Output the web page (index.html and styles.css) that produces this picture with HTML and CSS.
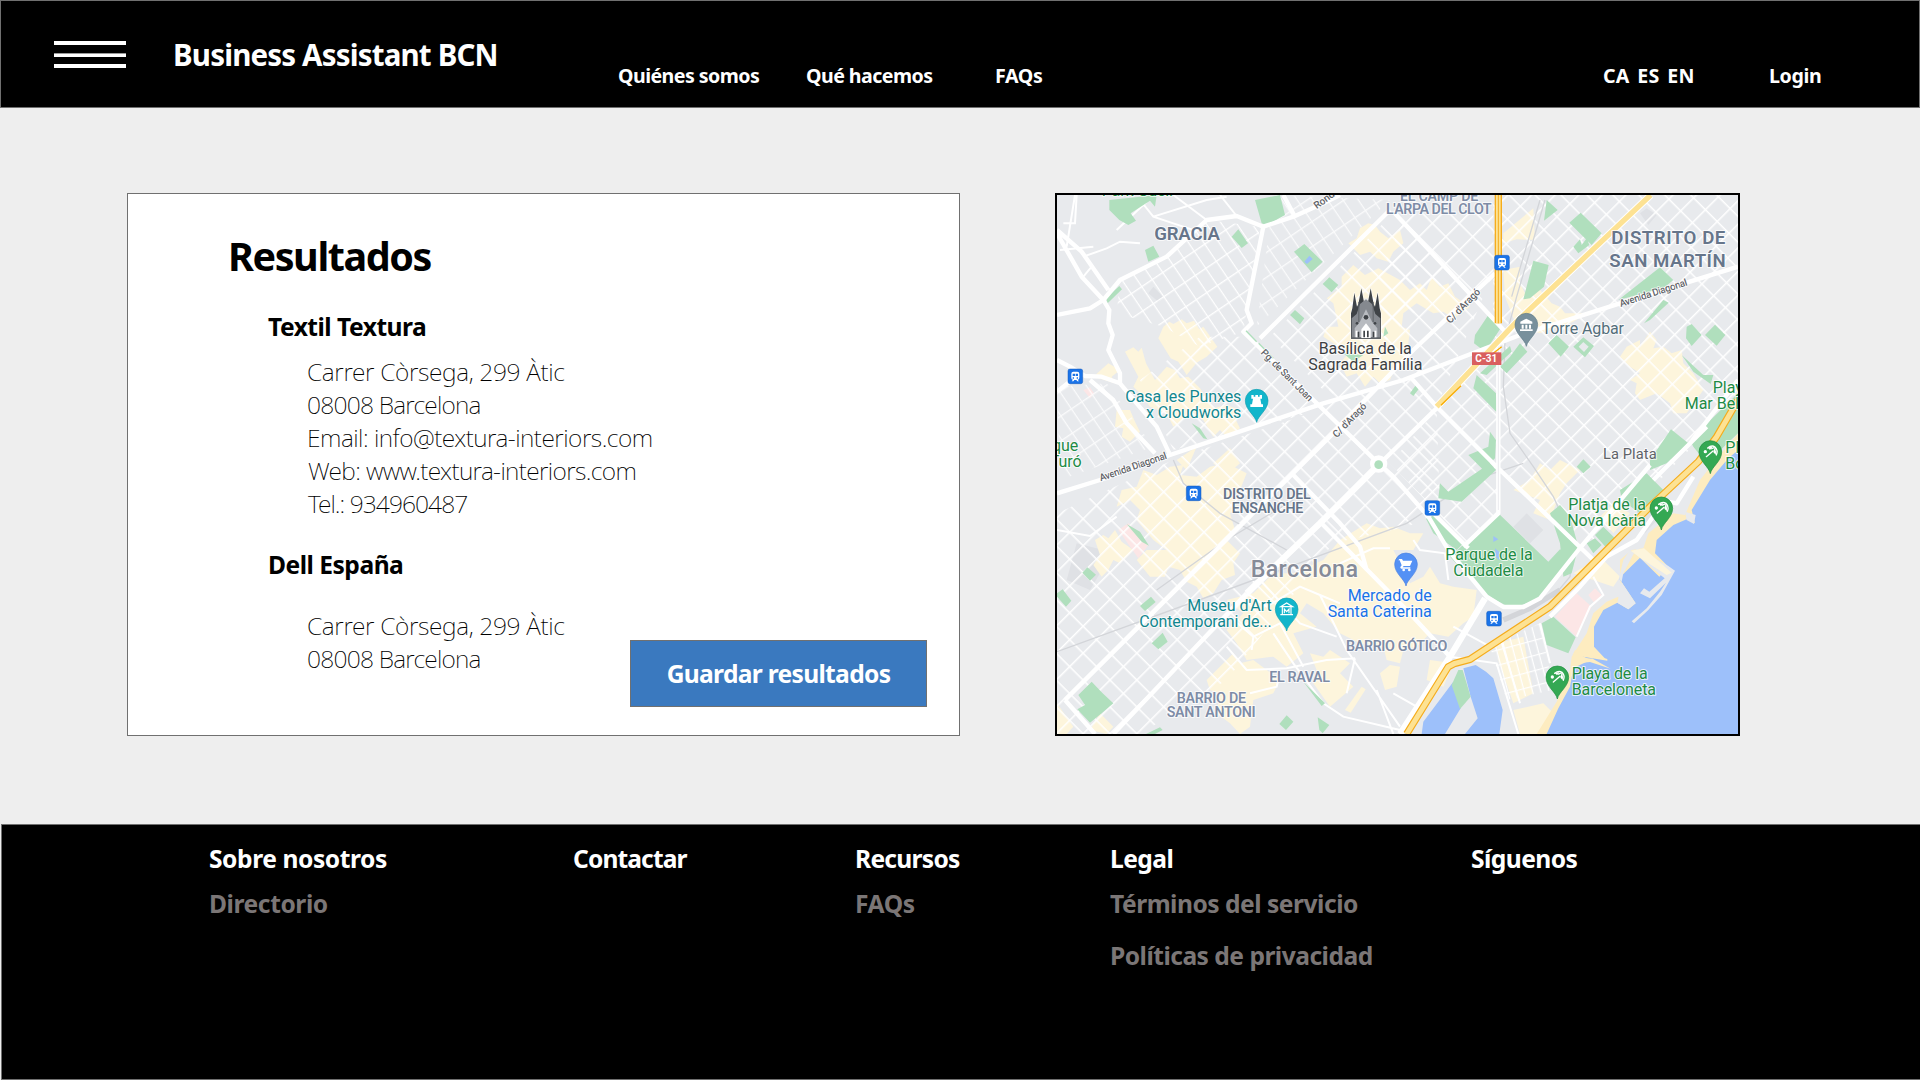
FILE: index.html
```
<!DOCTYPE html>
<html lang="es">
<head>
<meta charset="utf-8">
<title>Business Assistant BCN</title>
<link rel="stylesheet" href="styles.css">
</head>
<body>
<header class="header">
  <button class="menu" aria-label="Menú"><span></span><span class="menu-mid"></span><span></span></button>
  <div class="brand">Business Assistant BCN</div>
  <nav class="nav">
    <a>Quiénes somos</a>
    <a>Qué hacemos</a>
    <a class="nav-faqs">FAQs</a>
  </nav>
  <div class="langs"><a>CA</a><a>ES</a><a>EN</a></div>
  <a class="login">Login</a>
</header>

<main class="main">
  <section class="results">
    <h1>Resultados</h1>
    <h2 class="company">Textil Textura</h2>
    <div class="address">
      <p class="l-street">Carrer Còrsega, 299 Àtic</p>
      <p class="l-city">08008 Barcelona</p>
      <p class="l-email">Email: info@textura-interiors.com</p>
      <p class="l-web">Web: www.textura-interiors.com</p>
      <p class="l-tel">Tel.: 934960487</p>
    </div>
    <div class="second">
      <div>
        <h2 class="company company-dell">Dell España</h2>
        <div class="address address-dell">
          <p class="l-street">Carrer Còrsega, 299 Àtic</p>
          <p class="l-city">08008 Barcelona</p>
        </div>
      </div>
      <button class="save">Guardar resultados</button>
    </div>
  </section>

  <section class="map">
    <svg width="681" height="539" viewBox="51 45 2043 1617" preserveAspectRatio="none">
      <defs>
        <pattern id="blocks" width="57" height="57" patternUnits="userSpaceOnUse" patternTransform="translate(1016 852) rotate(45)">
          <path d="M0 0H57M0 0V57" stroke="#fff" stroke-width="9" fill="none"/>
        </pattern>
        <pattern id="blocksEast" width="50" height="55" patternUnits="userSpaceOnUse" patternTransform="translate(1190 680) rotate(45)">
          <path d="M0 0H50M0 0V55" stroke="#fff" stroke-width="9" fill="none"/>
        </pattern>
        <pattern id="lanes" width="62" height="38" patternUnits="userSpaceOnUse" patternTransform="rotate(56)">
          <path d="M0 0H62M0 0V38" stroke="#fff" stroke-width="8" fill="none"/>
        </pattern>
        <pattern id="beachBlocks" width="44" height="24" patternUnits="userSpaceOnUse" patternTransform="rotate(75)">
          <path d="M0 0H44M0 0V24" stroke="#fff" stroke-width="7" fill="none"/>
        </pattern>
        <path id="pin" d="M0 65C-4 44-34 28-34 0A34 34 0 0 1 34 0C34 28 4 44 0 65Z"/>
        <g id="train">
          <rect width="44" height="44" rx="6" fill="#1a73e8" stroke="#1558b8" stroke-width="1.5"/>
          <path fill="#fff" d="M16 8h12q6 0 6 6v13q0 5-5 5l4 5h-5l-3-4h-6l-3 4h-5l4-5q-5 0-5-5V14q0-6 6-6z"/>
          <path fill="#1a73e8" d="M14 14h7v7h-7zM23 14h7v7h-7zM14 25h4v4h-4zM26 25h4v4h-4z"/>
        </g>
        <g id="beach">
          <use href="#pin" fill="#34a853" stroke="#1e8e3e" stroke-width="2"/>
          <circle cx="-15" cy="-1" r="5" fill="#fff"/>
          <path fill="none" stroke="#fff" stroke-width="4" stroke-linecap="round" d="M-12 14L8-3M-8-12Q4-22 14-15Q24-5 18 9"/>
          <path fill="#fff" d="M-7-12Q0-17 7-15L-1-6ZM14-10Q19-2 16 8L9 1Z"/>
          <path fill="none" stroke="#fff" stroke-width="4" d="M2-9L13-14M11-1L15-12"/>
        </g>
      </defs>

      <rect x="51" y="45" width="2043" height="1617" fill="#e8eaed"/>
      <g fill="#dfe1e5">
        <path d="M110 1090l80 20-10 70-30 50-70-30zM1790 1000l20-60 60 60-55 60zM1460 1000l50 50-40 40-50-50zM1800 100l20-15 30 20-25 30zM340 320l30 30-15 15-30-25z"/>
      </g>

      <!-- Commercial areas -->
      <g fill="#fdf5dc">
        <path d="M370 440L388 425 400 432 425 418 440 430 462 422 478 448 490 440 532 500 500 530 470 548 440 585 415 545 392 535 355 475Z"/>
        <path d="M255 515L280 502 295 515 305 503 318 550 345 600 380 560 405 570 420 595 445 590 480 625 520 685 560 675 600 690 585 715 600 745 560 770 540 750 520 770 490 720 450 700 420 725 400 740 380 700 330 680 300 640 280 620 295 590Z"/>
        <path d="M160 590L205 550 240 570 215 590 225 610ZM230 690L270 690 285 725 300 755 270 785 245 770 250 745 225 740ZM410 840L470 800 440 870ZM520 850L570 805 600 850 560 885Z"/>
        <path d="M925 190L950 175 960 145 985 130 1005 135 1020 155 1045 175 1080 150 1090 190 1060 215 1045 245 1010 235 990 215 960 225ZM905 290L940 255 975 285 1015 265 1080 300 1110 330 1140 310 1160 330 1175 290 1200 320 1225 310 1245 350 1290 380 1265 400 1240 415 1210 395 1180 400 1130 370 1090 400 1085 440 1110 450 1100 530 1070 550 1050 600 1020 610 1000 590 975 620 950 580 920 590 900 550 925 520 850 470 860 440 895 440 880 370 860 355 905 320Z"/>
        <path d="M310 870L350 885 390 860 430 855 420 885 470 890 510 860 560 850 620 880 600 930 575 950 595 985 570 1000 585 1050 560 1080 600 1120 580 1150 585 1185 545 1200 520 1240 490 1255 470 1220 440 1205 420 1170 385 1160 375 1190 330 1190 290 1140 320 1110 380 1110 340 1080 290 1020 300 990 270 960 230 980 245 930 290 920Z"/>
        <path d="M165 1080L190 1065 205 1075 225 1050 245 1085 280 1110 240 1150 220 1140 205 1170 185 1190 160 1155 180 1125Z"/>
        <path d="M1390 160L1480 85 1485 180 1430 178 1390 190ZM1390 270L1440 260 1440 310 1460 350 1500 330 1535 370 1560 380 1575 400 1640 400 1600 425 1500 460 1430 440 1395 350Z"/>
        <path d="M1740 530L1760 500 1800 480 1800 500 1830 455 1850 480 1840 505 1870 500 1895 520 1925 510 1930 550 1960 580 1990 630 1940 700 1900 700 1890 670 1850 640 1800 660 1785 640 1790 610 1770 600 1800 580 1770 560Z"/>
        <path d="M1470 900L1500 850 1530 870 1560 840 1620 870 1580 910 1560 940 1530 1020 1480 1000 1500 960 1420 930ZM1770 1000L1720 970 1680 1010 1720 1060ZM1600 1180L1680 1130 1740 1190 1720 1220Z"/>
        <path d="M560 1260L640 1240 700 1180 760 1180 850 1140 900 1080 980 1030 1020 1045 1060 1040 1110 1060 1150 1060 1120 1110 1060 1110 1080 1150 1110 1210 1150 1190 1170 1160 1200 1210 1240 1220 1310 1230 1300 1310 1270 1330 1225 1370 1170 1360 1130 1400 1090 1410 1080 1450 1040 1440 1030 1400 960 1390 900 1360 850 1300 800 1270 780 1300 830 1340 760 1360 790 1420 740 1460 700 1430 620 1440 590 1390 560 1350 610 1300Z"/>
        <path d="M500 1500L580 1420 600 1450 640 1440 720 1500 700 1540 640 1560 630 1640 600 1662 570 1630 530 1600 540 1540 510 1530ZM810 1420L850 1430 870 1410 930 1450 900 1480 940 1520 870 1580 820 1510 830 1470ZM1020 1480L1050 1455 1080 1460 1070 1520 1035 1530Z"/>
        <path d="M51 1570L100 1640 80 1662 51 1662ZM180 1600L220 1640 200 1662 150 1650ZM1170 1440L1240 1450 1210 1520 1160 1500Z"/>
        <path d="M1370 1390L1450 1370 1480 1540 1420 1570 1375 1440ZM1420 1590L1510 1570 1540 1600 1500 1662 1440 1662Z"/>
        <path d="M915 1590l50-70 12 8-45 70z"/>
      </g>
      <g fill="#fce6e6">
        <path d="M235 1050L265 1030 325 1095 295 1135ZM1545 1310L1610 1240 1655 1280 1610 1370ZM1645 1245L1665 1225 1685 1245 1665 1272ZM130 630L150 622 162 640 150 655Z"/>
      </g>

      <!-- Street grid -->
      <path fill="url(#blocks)" d="M51 1000L420 830 840 690 1100 100 1360 100 1360 280 1190 680 1200 1000 1100 1040 880 1090 560 1500 300 1662 51 1662Z"/>
      <path fill="url(#blocks)" d="M480 470L620 470 840 690 400 810 300 600Z"/>
      <path fill="url(#blocks)" d="M690 470L1060 100 1240 280 870 650Z"/>
      <path fill="url(#blocksEast)" d="M1360 45H2094V660L1830 930 1640 1120 1380 860 1190 680 1360 520Z"/>
      <path fill="url(#blocksEast)" d="M1050 850L1190 690 1375 870 1375 1000 1280 1090Z"/>
      <path fill="url(#lanes)" d="M240 300L380 230 500 120 660 140 620 390 610 455 480 500 370 440 230 400Z"/>
      <path fill="url(#lanes)" d="M51 620L200 610 340 800 60 900ZM700 45L1050 60 650 440Z" opacity=".8"/>
      <path fill="url(#beachBlocks)" d="M1350 1400L1500 1330 1540 1530 1400 1560Z"/>
      <g fill="none" stroke="#fff" stroke-width="6">
        <path d="M70 130L105 130 110 45M105 45L80 200M130 230L200 205 240 185 300 190M60 210L160 200M300 60L340 110 400 130 460 150M320 65L230 150M340 110L500 60 560 50M500 120L400 45M590 108L540 45M130 290L155 260"/>
        <path d="M620 1240L680 1280 780 1220 840 1245M570 1310L640 1370 635 1410M640 1370L720 1330 790 1460M560 1400L620 1470 740 1465 860 1440 945 1435M630 1540L710 1520 720 1480M660 1200L780 1330 890 1370M840 1245L920 1410 1080 1640M700 1360L760 1450 850 1570 910 1610 1080 1650M945 1435L920 1540M1010 1530L1060 1662M900 1270L840 1245"/>
        <path d="M1230 1430L1370 1450 1435 1662M1500 1330L1530 1450M1380 1370L1440 1570M1240 1340L1350 1400M1120 1080L1140 1110 1215 1120 1225 1200M1060 1540L1130 1580M1610 1370L1650 1280 1690 1245 1660 1190M51 1050L150 1068 230 1010M900 1150L1000 1105 1050 1105"/>
      </g>

      <!-- Railways -->
      <g fill="none" stroke="#d3d5d9" stroke-width="4">
        <path d="M1515 60L1430 350 1395 480 1390 620 1410 760 1480 860M1500 60L1415 350M51 1415L560 1230 1100 1030 1300 900 1450 850M350 1230L560 1080 760 960M400 840L430 910 540 1000 740 1110M1480 860L1540 950 1600 1080 1590 1190 1540 1250"/>
        <path stroke-width="16" d="M1390 1320L1470 1285 1560 1230"/>
      </g>

      <!-- Parks -->
      <g fill="#b0dfbd">
        <path d="M208 60L350 45 345 80 330 62 272 100 288 122 265 135 238 120 208 90ZM645 60L720 45 735 105 680 135 665 130ZM575 170L595 148 624 190 605 204ZM315 210L340 197 358 230 325 245ZM198 355L238 318 246 328 203 370ZM762 215L793 192 848 245 815 277ZM848 312L868 292 895 315 875 337ZM750 405L765 390 793 415 780 433Z"/>
        <path d="M455 730L480 745 502 778 490 775ZM1035 440L1045 460 1030 470ZM910 520L970 525 940 545ZM260 1032L300 1055 327 1097 305 1085ZM127 1178L142 1162 168 1184 150 1202ZM51 1240L68 1228 94 1262 78 1280 51 1250ZM300 1278L333 1250 347 1266 315 1293ZM335 1390L368 1358 383 1385 355 1408ZM115 1545L155 1505 188 1540 220 1570 185 1600 150 1628 112 1588 135 1575ZM718 1632L740 1606 760 1625 738 1650ZM833 1612L868 1635 848 1660 838 1650ZM318 1662L360 1642 368 1650 345 1662ZM790 1505L855 1570 845 1578ZM1110 640L1130 612 1138 625 1120 648Z"/>
        <path d="M1520 60L1553 90 1512 122ZM1588 128L1622 98 1685 160 1655 195ZM1600 200L1620 178 1625 195 1640 175 1648 195 1615 220ZM1480 242L1526 255 1512 320 1470 355 1450 358ZM1305 465L1345 405 1385 440 1335 515 1302 490ZM1320 580L1410 498 1415 515 1340 585ZM1410 530L1440 490 1462 515 1400 580 1380 560ZM1310 585L1368 640 1370 697 1300 625ZM1525 490L1550 465 1587 500 1562 530ZM1600 500L1630 472 1662 498 1635 532ZM1735 360L1860 262 1900 300 1870 325ZM1812 430L1870 360 1886 368 1830 420ZM1940 440L1955 432 1985 465 1955 498 1938 475ZM1995 465L2025 434 2056 465 2030 497ZM1925 525L1990 585 2020 585 2012 612 1960 575ZM1830 840L1893 748 1945 790 1880 850 1830 870ZM1950 780L2094 640 2094 760 2000 850 1960 800ZM1610 860L1630 838 1652 860 1630 880Z"/>
        <path d="M1350 755L1368 780 1365 835 1330 870 1285 825 1345 800ZM1200 910L1225 935 1350 850 1368 870 1265 965 1195 955ZM1155 1010L1180 1005 1270 1090 1250 1110 1180 1060ZM1375 1000L1525 1145 1560 1108 1590 1135 1500 1255 1445 1275 1395 1275 1330 1240 1230 1130ZM1530 1000L1560 975 1590 1010 1615 1100 1595 1180 1570 1190 1560 1090ZM1740 930L1820 880 1870 930 1800 1000 1745 960ZM1640 1090L1665 1075 1685 1095 1660 1120ZM1665 1065L1690 1040 1725 1075 1700 1105ZM1505 1330L1540 1310 1607 1372 1585 1420 1520 1395Z"/>
      </g>
      <path fill="#e8eaed" d="M1616 500l14-14 16 14-14 16z"/>
      <path fill="#9dc0fa" d="M793 245l15-18 10 10-17 15zM1360 1068l15 10-15 8zM1365 1105l12 10v25l-10-10z"/>

      <!-- Sea, beaches and harbour -->
      <g transform="translate(1050 840)">
        <path fill="#fdecc0" d="M440 822L500 725 540 630 545 590 590 520 610 460 650 425 685 410 710 440 690 360 690 300 725 270 760 265 775 220 850 160 885 165 930 60 985 -10 1045 -80V822Z"/>
        <path fill="#9dc0fa" d="M470 822L505 745 540 680 550 625 605 598 650 625 558 578 650 601 612 560 612 500 640 450 682 428 715 448 737 430 687 355 750 293 808 350 835 320 795 280 800 240 850 195 890 178 915 190 905 150 960 60 1015 -5 1045 -30V822Z"/>
        <path fill="#e8eaed" d="M835 318L855 332 815 405 775 450 732 490 725 484 770 445 810 395 828 368 780 415 750 400 762 385 778 395 824 355 805 340 750 293 720 270 700 300 687 355 737 430 715 448 682 428 700 340 740 265ZM885 155L917 165 912 192 890 180Z"/>
        <path fill="#fdecc0" d="M555 570L652 597V602L548 585ZM548 590L608 596 662 626 600 606 545 612Z"/>
        <path fill="#fdf5dc" d="M722 272L762 265 845 338 830 345 750 293Z"/>
        <path fill="#9dc0fa" d="M95 822L100 785 190 665 212 745 165 822ZM220 625L257 615 288 635 310 655 338 750 328 822H225L263 775 242 710Z"/>
        <path fill="#b0dfbd" d="M205 630H218L242 710 210 747 185 675Z"/>
      </g>

      <!-- Avenues -->
      <g fill="none" stroke="#fff" stroke-width="13" stroke-linejoin="round">
        <path d="M51 405L150 385 190 360 240 300 380 230 500 120 590 108 670 140 760 110 850 70 900 45M51 150L125 215 205 330M51 160L125 290 190 360M190 360L208 390 205 430 218 465 205 510 240 580 240 610M51 540L90 560 135 588 185 590 240 610 290 670 350 740 388 820"/>
        <path d="M150 600L220 660 260 730 345 820M51 635L120 580M670 140L620 390 635 430 610 455 1005 840 1060 890 1165 1010 1225 1110 1340 1250 1390 1281 1450 1281 1500 1255 1615 1110 1830 855M660 475L1050 90M730 45L765 110M1060 95L1400 460"/>
        <path d="M51 940L180 900 390 825 850 670 1090 600 1440 465 1740 370 2094 260M1110 590L1190 680 1370 860 1660 1140M1375 500V1000L1270 1100M75 1560L880 760 1120 510 1365 280M75 1560L165 1662M220 1662L620 1240M1000 870L1195 680M1155 1010L1180 1000 1285 1105"/>
        <path d="M840 1025L1100 1290 1230 1430M760 885L900 1030 960 1100 980 1170M1950 790L2094 600M1840 900L2000 740M1860 960L1910 970 1960 890M1530 1310L1620 1220 1700 1130 1790 1080 1860 980"/>
        <path stroke-width="19" d="M620 1240L840 1030 1005 865M1335 1255L1230 1430 1080 1662"/>
      </g>
      <circle cx="1016" cy="852" r="26" fill="#fff"/>
      <circle cx="1016" cy="854" r="13" fill="#b0dfbd"/>
      <path d="M618 452L650 485M656 490L700 535" stroke="#b0dfbd" stroke-width="4"/>
      <path d="M1375 500V990" stroke="#dfe1e5" stroke-width="2"/>

      <!-- Highways -->
      <g fill="none" stroke-linejoin="round">
        <path stroke="#fff" stroke-width="22" d="M1832 45L1430 425 1190 680"/>
        <path stroke="#fde293" stroke-width="16" d="M1832 45L1430 425 1190 680"/>
        <path stroke="#f9ab00" stroke-width="4" d="M1263 617L1203 676M1385 500L1360 520"/>
        <path stroke="#f5ac1c" stroke-width="22" d="M1375 45V430"/>
        <path stroke="#fde293" stroke-width="14" d="M1375 45V430"/>
        <path stroke="#f5ac1c" stroke-width="3" d="M1375 45V430"/>
        <path stroke="#f5ac1c" stroke-width="22" d="M1100 1662L1160 1565 1225 1460 1245 1450 1290 1438 1530 1280 1650 1160 1830 980 1975 845 2030 770 2094 660"/>
        <path stroke="#fde293" stroke-width="15" d="M1100 1662L1160 1565 1225 1460 1245 1450 1290 1438 1530 1280 1650 1160 1830 980 1975 845 2030 770 2094 660"/>
      </g>

      <!-- Sagrada Família -->
      <g>
        <path fill="#3f4347" stroke="#fff" stroke-width="3" paint-order="stroke" d="M933 477V400L937 385 943 338 951 380 955 372 964 325 972 366H984L992 325 1001 372 1005 380 1013 338 1019 385 1023 400V477Z"/>
        <path fill="#e8eaed" d="M973 355h10v8h-10z"/>
        <path fill="#85898f" d="M935 477V415L950 402 960 372 978 358 996 372 1006 402 1021 415V477Z"/>
        <path fill="#b8bbc0" d="M944 477V445L960 425 978 388 996 425 1012 445V477Z"/>
        <path fill="#5f6368" d="M955 366h3v60h-3zM998 366h3v60h-3zM933 472h90v5h-90z"/>
        <path fill="#fff" d="M964 474V448L978 430 992 448V474ZM947 472V452h6V472ZM1003 472V452h6V472Z"/>
        <path fill="#3f4347" d="M970 472V452h5V472ZM981 472V452h5V472ZM953 472V455h5V472ZM998 472V455h5V472Z"/>
        <circle cx="978" cy="412" r="7" fill="#3f4347"/><circle cx="951" cy="430" r="4" fill="#3f4347"/><circle cx="1005" cy="430" r="4" fill="#3f4347"/>
      </g>

      <!-- Labels -->
      <g class="lbl poi" fill="#1e8b45">
        <text x="185" y="49" textLength="214">Park Güell</text>
        <text x="115" y="812" text-anchor="end">Parque</text>
        <text x="125" y="860" text-anchor="end">del Turó</text>
        <text x="2018" y="640">Playa de</text>
        <text x="1934" y="687">Mar Bella</text>
        <text x="2056" y="820">Platja</text>
        <text x="2056" y="868">Bogatell</text>
        <text x="1585" y="990" textLength="233">Platja de la</text>
        <text x="1582" y="1038" textLength="236">Nova Icària</text>
        <text x="1216" y="1139" textLength="262">Parque de la</text>
        <text x="1240" y="1188" textLength="210">Ciudadela</text>
        <text x="1595" y="1497" textLength="228">Playa de la</text>
        <text x="1595" y="1545" textLength="253">Barceloneta</text>
      </g>
      <g class="lbl poi" fill="#12878f">
        <text x="256" y="667" textLength="348">Casa les Punxes</text>
        <text x="318" y="714" textLength="286">x Cloudworks</text>
        <text x="442" y="1293" textLength="253">Museu d'Art</text>
        <text x="298" y="1341" textLength="397">Contemporani de...</text>
      </g>
      <g class="lbl poi" fill="#1a73e8">
        <text x="923" y="1262" textLength="252">Mercado de</text>
        <text x="863" y="1310" textLength="312">Santa Caterina</text>
      </g>
      <g class="lbl poi" fill="#3c4043">
        <text x="836" y="522" textLength="279">Basílica de la</text>
        <text x="805" y="570" textLength="342">Sagrada Família</text>
      </g>
      <g class="lbl poi">
        <text x="1505" y="462" textLength="247" fill="#546e7a">Torre Agbar</text>
        <text x="1689" y="837" textLength="161" class="place" fill="#5f6368">La Plata</text>
        <text x="632" y="1190" textLength="322" class="city" fill="#868b98">Barcelona</text>
      </g>
      <g class="lbl area" fill="#66758a">
        <text x="343" y="180" textLength="197" class="district">GRACIA</text>
        <text x="1714" y="193" textLength="342" class="district">DISTRITO DE</text>
        <text x="1708" y="262" textLength="349" class="district">SAN MARTÍN</text>
        <text x="549" y="957" textLength="263">DISTRITO DEL</text>
        <text x="575" y="998" textLength="215">ENSANCHE</text>
      </g>
      <g class="lbl area" fill="#7e8ca6">
        <text x="1080" y="62" textLength="235">EL CAMP DE</text>
        <text x="1038" y="102" textLength="317">L'ARPA DEL CLOT</text>
        <text x="918" y="1413" textLength="304">BARRIO GÓTICO</text>
        <text x="688" y="1507" textLength="182">EL RAVAL</text>
        <text x="410" y="1570" textLength="208">BARRIO DE</text>
        <text x="380" y="1611" textLength="267">SANT ANTONI</text>
      </g>
      <g class="lbl road" fill="#5f6368">
        <text transform="translate(830 88) rotate(-36)">Ronda</text>
        <text transform="translate(1231 432) rotate(-46)" textLength="132">C/ d'Aragó</text>
        <text transform="translate(1742 381) rotate(-18)" textLength="212">Avenida Diagonal</text>
        <text transform="translate(661 520) rotate(45)" textLength="206">Pg. de Sant Joan</text>
        <text transform="translate(890 775) rotate(-46)" textLength="132">C/ d'Aragó</text>
        <text transform="translate(182 904) rotate(-19)" textLength="212">Avenida Diagonal</text>
      </g>
      <rect x="1296" y="517" width="88" height="38" fill="#d95f5f"/>
      <text x="1306" y="546" textLength="66" class="shield">C-31</text>

      <!-- Markers -->
      <use href="#train" x="84" y="567"/>
      <use href="#train" x="1364" y="226"/>
      <use href="#train" x="439" y="918"/>
      <use href="#train" x="1155" y="962"/>
      <use href="#train" x="1340" y="1294"/>
      <use href="#beach" x="2011" y="816"/>
      <use href="#beach" x="1864" y="985"/>
      <use href="#beach" x="1552" y="1492"/>
      <g transform="translate(650 662)">
        <use href="#pin" fill="#12b5cb" stroke="#129eaf" stroke-width="2"/>
        <path fill="#fff" d="M-16-17h7v5h5v-5h8v5h5v-5h7v11h-5l3 17h5v8h-38v-8h5l3-17h-5z"/>
      </g>
      <g transform="translate(1459 434)">
        <use href="#pin" fill="#78909c" stroke="#607d8b" stroke-width="2"/>
        <path fill="#fff" d="M0-18L18-9V-3H-18V-9ZM-14 0h6v12h-6zM-3 0h6v12h-6zM8 0h6v12h-6zM-19 14h38v5h-38z"/>
      </g>
      <g transform="translate(740 1288)">
        <use href="#pin" fill="#12b5cb" stroke="#129eaf" stroke-width="2"/>
        <path fill="none" stroke="#fff" stroke-width="3.5" d="M-18-8L0-19 18-8ZM-13-8V15M13-8V15M-19 16H19M-7 12V-1L0 7 7-1V12"/>
      </g>
      <g transform="translate(1098 1153)">
        <use href="#pin" fill="#5491f5" stroke="#4a80e0" stroke-width="2"/>
        <path fill="#fff" d="M-20-16h8l3 5h28l-7 16h-19l-3 4h23v4h-27q-4-1-3-5l4-5-6-15h-4z"/>
        <circle cx="-7" cy="17" r="4" fill="#fff"/><circle cx="10" cy="17" r="4" fill="#fff"/>
      </g>
    </svg>
  </section>
</main>

<footer class="footer">
  <div class="col">
    <h3 class="f-about">Sobre nosotros</h3>
    <a>Directorio</a>
  </div>
  <div class="col">
    <h3 class="f-contact">Contactar</h3>
  </div>
  <div class="col">
    <h3 class="f-resources">Recursos</h3>
    <a>FAQs</a>
  </div>
  <div class="col">
    <h3>Legal</h3>
    <a class="f-terms">Términos del servicio</a>
    <a class="f-privacy">Políticas de privacidad</a>
  </div>
  <div class="col">
    <h3>Síguenos</h3>
  </div>
</footer>
</body>
</html>
```
FILE: styles.css
```
* { box-sizing: border-box; margin: 0; padding: 0; }

body {
  width: 1920px;
  height: 1080px;
  overflow: hidden;
  background: #eee;
  color: #000;
  font-family: "Noto Sans", "Open Sans", sans-serif;
  white-space: nowrap;
}

button { border: 0; background: none; font: inherit; }

/* Header */
.header {
  display: grid;
  grid-template-columns: 119px 445px 984px 167px 1fr;
  height: 108px;
  padding-left: 53px;
  border: 1px solid #707070;
  background: #000;
  color: #fff;
  font-weight: 700;
  font-size: 19.6px;
  line-height: 24px;
}
.menu {
  display: flex;
  flex-direction: column;
  gap: 7.5px;
  width: 72px;
  margin-top: 40px;
}
.menu span { display: block; height: 4px; background: #fff; }
.menu .menu-mid { height: 4px; border: solid #9a9a9a; border-width: 1px 0 0; }
.brand {
  margin-top: 34px;
  font-size: 29.5px;
  line-height: 40px;
  letter-spacing: -0.82px;
}
.nav {
  display: grid;
  grid-template-columns: 188px 189px auto;
  justify-content: start;
  margin-top: 63px;
  letter-spacing: -0.55px;
}
.nav-faqs { letter-spacing: -0.34px; }
.langs {
  display: flex;
  gap: 8px;
  margin-top: 63px;
  padding-left: 1px;
  letter-spacing: 0.1px;
}
.login { margin-top: 63px; letter-spacing: -0.36px; }

/* Main */
.main {
  display: flex;
  gap: 95px;
  height: 716px;
  padding: 85px 0 0 127px;
}
.results {
  width: 833px;
  height: 543px;
  border: 1px solid #707070;
  background: #fff;
}
.results h1 {
  margin: 36px 0 0 100px;
  font-size: 39.5px;
  line-height: 52px;
  letter-spacing: -1.4px;
}
.company {
  margin: 29px 0 0 140px;
  font-size: 24.6px;
  line-height: 32px;
  letter-spacing: -0.51px;
}
.address {
  margin: 12px 0 0 179px;
  font-weight: 200;
  font-size: 24.6px;
  line-height: 33px;
}
.l-street { letter-spacing: -0.35px; }
.l-city { letter-spacing: -0.78px; }
.l-email { letter-spacing: -0.5px; }
.l-web { letter-spacing: -0.62px; padding-left: 1px; }
.l-tel { letter-spacing: -0.95px; padding-left: 1px; }
.second {
  display: flex;
  justify-content: space-between;
  padding-right: 32px;
}
.company-dell { margin: 29px 0 0 140px; letter-spacing: -0.5px; }
.address-dell { margin-top: 28px; }
.save {
  width: 297px;
  height: 67px;
  margin-top: 120px;
  border: 1px solid #707070;
  background: #3a79bf;
  color: #fff;
  font-weight: 700;
  font-size: 24.6px;
  line-height: 66px;
  letter-spacing: -0.7px;
}

/* Map */
.map {
  width: 685px;
  height: 543px;
  border: 2px solid #000;
}
.map svg { display: block; }
.lbl text {
  font-family: Roboto, sans-serif;
  paint-order: stroke;
  stroke: #fff;
  stroke-width: 6px;
  stroke-opacity: 0.75;
  stroke-linejoin: round;
}
.poi text { font-size: 48px; }
.poi .place { font-size: 44px; }
.poi .city { font-size: 70px; font-weight: 500; }
.area text { font-size: 43px; font-weight: 600; }
.area .district { font-size: 56px; }
.road text { font-size: 30px; font-weight: 500; }
.shield {
  font: 700 30px Roboto, sans-serif;
  fill: #fff;
}

/* Footer */
.footer {
  display: grid;
  grid-template-columns: 364px 282px 255px 361px auto;
  justify-content: start;
  height: 256px;
  margin-left: 1px;
  padding-left: 207px;
  border: 1px solid #707070;
  border-right: 0;
  background: #000;
  font-weight: 700;
  font-size: 24.6px;
  line-height: 32px;
}
.col { display: flex; flex-direction: column; padding-top: 18px; }
.col h3 { color: #fff; font-size: 24.6px; letter-spacing: -0.55px; }
.col a { margin-top: 13px; color: #7b7676; letter-spacing: -0.42px; }
.col a + a { margin-top: 20px; }
.col .f-about { letter-spacing: -0.44px; }
.col .f-contact { letter-spacing: -0.89px; }
.col .f-resources { letter-spacing: -0.74px; }
.col .f-terms { letter-spacing: -0.5px; }
.col .f-privacy { letter-spacing: -0.52px; }
```
